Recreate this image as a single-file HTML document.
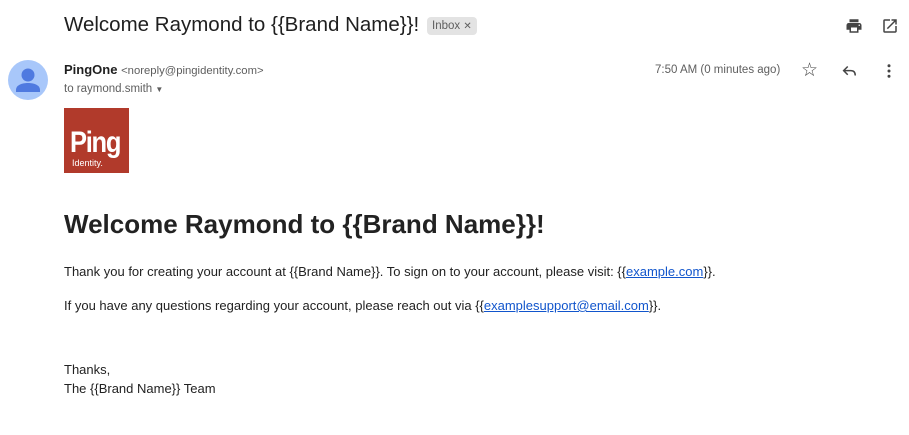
<!DOCTYPE html>
<html><head><style>
body{margin:0;width:909px;height:435px;background:#fff;font-family:"Liberation Sans",Arial,sans-serif;color:#222;position:relative;overflow:hidden}
.a{position:absolute;white-space:nowrap}
a{color:#1155cc}
</style></head><body>
<div class="a" style="left:64px;top:13px;font-size:20.5px;color:#1f1f1f">Welcome Raymond to {{Brand Name}}!</div>
<div class="a" style="left:427px;top:17px;height:18px;line-height:18px;padding:0 5px;background:#e3e3e3;border-radius:4px;font-size:11.5px;color:#5e5e5e">Inbox <span style="font-size:10px">✕</span></div>
<svg class="a" style="left:845px;top:17px" width="18" height="18" viewBox="0 0 24 24"><path fill="#444" d="M19 8H5c-1.66 0-3 1.34-3 3v6h4v4h12v-4h4v-6c0-1.66-1.34-3-3-3zm-3 11H8v-5h8v5zm3-7c-.55 0-1-.45-1-1s.45-1 1-1 1 .45 1 1-.45 1-1 1zm-1-9H6v4h12V3z"/></svg>
<svg class="a" style="left:881px;top:17px" width="18" height="18" viewBox="0 0 24 24"><path fill="#444" d="M19 19H5V5h7V3H5a2 2 0 00-2 2v14a2 2 0 002 2h14c1.1 0 2-.9 2-2v-7h-2v7zM14 3v2h3.59l-9.83 9.83 1.41 1.41L19 6.41V10h2V3h-7z"/></svg>
<svg class="a" style="left:8px;top:60px" width="40" height="40" viewBox="0 0 40 40"><circle cx="20" cy="20" r="20" fill="#a8c7fa"/><circle cx="20" cy="15" r="6.5" fill="#4f7ae0"/><path d="M8 30c0-5 6-7 12-7s12 2 12 7v2H8z" fill="#4f7ae0"/></svg>
<div class="a" style="left:64px;top:62px;font-size:13px"><b style="color:#1f1f1f">PingOne</b> <span style="font-size:11.3px;color:#5e5e5e">&lt;noreply@pingidentity.com&gt;</span></div>
<div class="a" style="left:64px;top:83px;font-size:11.5px;color:#5e5e5e">to raymond.smith <span style="font-size:8px">▼</span></div>
<div class="a" style="left:655px;top:64px;font-size:11.5px;color:#5e5e5e">7:50 AM (0 minutes ago)</div>
<div class="a" style="left:801px;top:59px;font-size:19px;color:#444">☆</div>
<svg class="a" style="left:841px;top:62px" width="18" height="18" viewBox="0 0 24 24"><path fill="none" stroke="#444" stroke-width="2" d="M9 6L3.5 11.5 9 17M4 11.5h9c4 0 6 2.5 6 6.5"/></svg>
<svg class="a" style="left:880px;top:62px" width="18" height="18" viewBox="0 0 24 24"><circle cx="12" cy="5" r="2" fill="#444"/><circle cx="12" cy="12" r="2" fill="#444"/><circle cx="12" cy="19" r="2" fill="#444"/></svg>
<div class="a" style="left:64px;top:108px;width:65px;height:65px;background:#b13a2b;color:#fff">
<div class="a" style="left:6px;top:18px;font-size:30px;font-weight:bold;letter-spacing:-1.5px;transform:scaleX(0.85);transform-origin:left">Ping</div>
<div class="a" style="left:8px;top:50px;font-size:9px">Identity.</div></div>
<div class="a" style="left:64px;top:209px;font-size:26px;font-weight:bold;color:#222">Welcome Raymond to {{Brand Name}}!</div>
<div class="a" style="left:64px;top:264px;font-size:13px">Thank you for creating your account at {{Brand Name}}. To sign on to your account, please visit: {{<a href="#">example.com</a>}}.</div>
<div class="a" style="left:64px;top:298px;font-size:13px">If you have any questions regarding your account, please reach out via {{<a href="#">examplesupport@email.com</a>}}.</div>
<div class="a" style="left:64px;top:362px;font-size:13px">Thanks,</div>
<div class="a" style="left:64px;top:381px;font-size:13px">The {{Brand Name}} Team</div>
</body></html>
